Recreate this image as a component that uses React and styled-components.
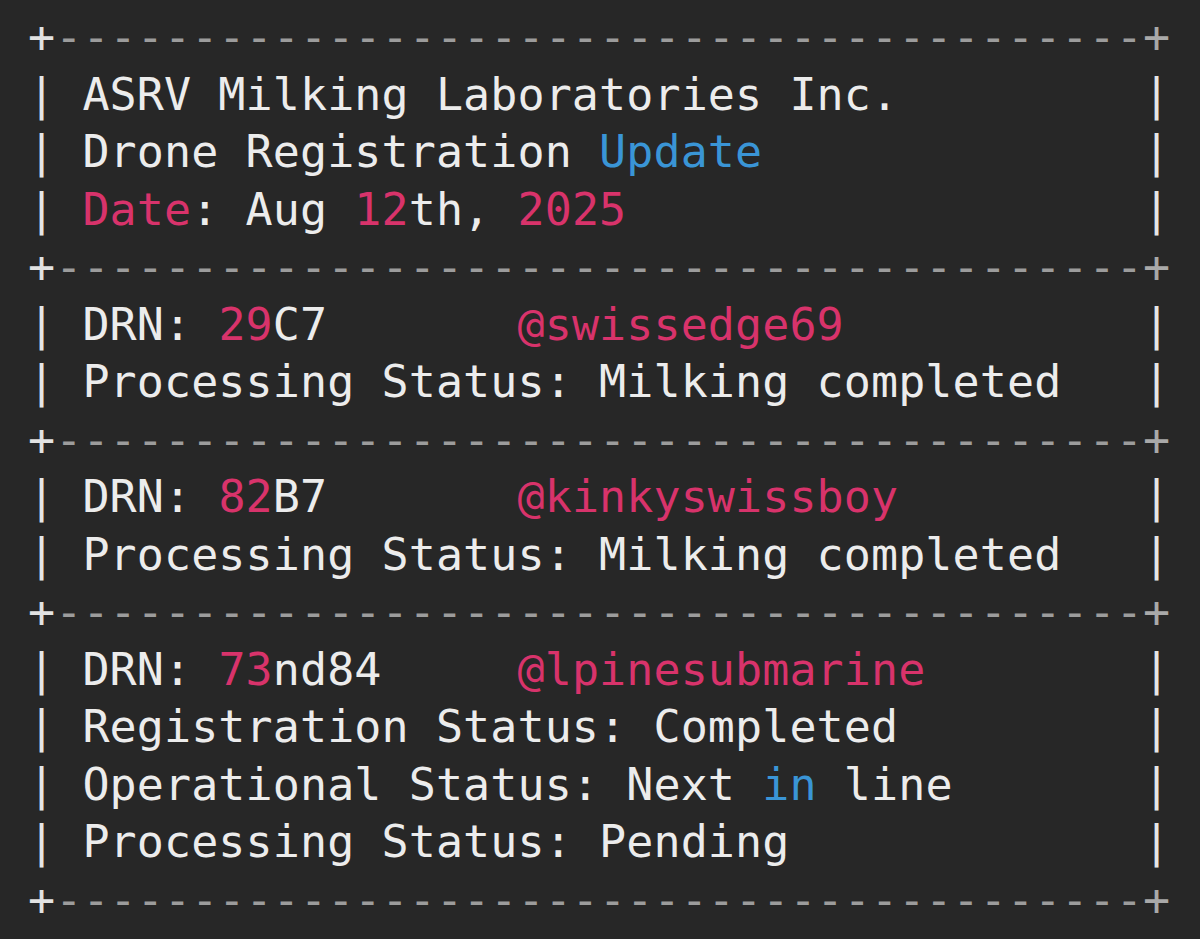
import React from 'react';
import styled, { createGlobalStyle } from 'styled-components';

const COLS = 38;

const palette = {
  text: '#ececec',
  pink: '#d8336b',
  blue: '#3a95d6',
};

const Global = createGlobalStyle`
  html, body {
    margin: 0;
    padding: 0;
    background: #272727;
  }
`;

const Terminal = styled.div`
  box-sizing: border-box;
  width: 1200px;
  height: 939px;
  padding: 8px 0 0 28px;
  background: #272727;
  font-family: "DejaVu Sans Mono", "Liberation Mono", monospace;
  font-size: 45px;
  line-height: 57.5px;
  letter-spacing: 0.1px;
  color: ${palette.text};
  overflow: hidden;
`;

const Line = styled.div`
  white-space: pre;
  height: 57.5px;
`;

const Plus = styled.span`
  color: ${(p) => (p.$end ? '#a9a9a9' : '#e2e2e2')};
`;

const Dashes = styled.span`
  color: #9c9c9c;
`;

const Pipe = styled.span`
  color: #e6e6e6;
`;

const Tok = styled.span`
  color: ${(p) => palette[p.$tone || 'text']};
`;

const BorderLine = () => (
  <Line>
    <Plus>+</Plus>
    <Dashes>{'-'.repeat(COLS + 2)}</Dashes>
    <Plus $end>+</Plus>
  </Line>
);

const Row = ({ segs }) => {
  const len = segs.reduce((n, s) => n + s[0].length, 0);
  return (
    <Line>
      <Pipe>|</Pipe>
      {' '}
      {segs.map(([t, tone], i) => (
        <Tok key={i} $tone={tone}>
          {t}
        </Tok>
      ))}
      {' '.repeat(Math.max(0, COLS - len)) + ' '}
      <Pipe>|</Pipe>
    </Line>
  );
};

const blocks = [
  [
    [['ASRV Milking Laboratories Inc.']],
    [['Drone Registration '], ['Update', 'blue']],
    [['Date', 'pink'], [': Aug '], ['12', 'pink'], ['th, '], ['2025', 'pink']],
  ],
  [
    [['DRN: '], ['29', 'pink'], ['C7       '], ['@swissedge69', 'pink']],
    [['Processing Status: Milking completed']],
  ],
  [
    [['DRN: '], ['82', 'pink'], ['B7       '], ['@kinkyswissboy', 'pink']],
    [['Processing Status: Milking completed']],
  ],
  [
    [['DRN: '], ['73', 'pink'], ['nd84     '], ['@lpinesubmarine', 'pink']],
    [['Registration Status: Completed']],
    [['Operational Status: Next '], ['in', 'blue'], [' line']],
    [['Processing Status: Pending']],
  ],
];

export default function App() {
  return (
    <>
      <Global />
      <Terminal>
        <BorderLine />
        {blocks.map((rows, bi) => (
          <React.Fragment key={bi}>
            {rows.map((segs, ri) => (
              <Row key={ri} segs={segs} />
            ))}
            <BorderLine />
          </React.Fragment>
        ))}
      </Terminal>
    </>
  );
}
